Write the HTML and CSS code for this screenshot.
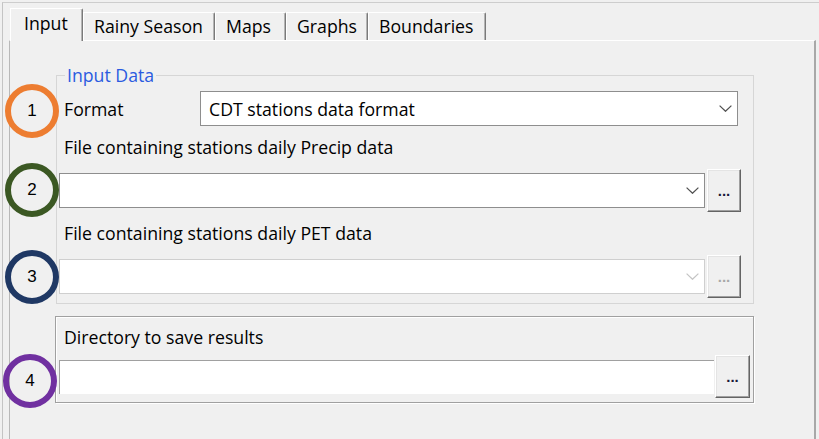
FILE: index.html
```html
<!DOCTYPE html>
<html>
<head>
<meta charset="utf-8">
<link rel="stylesheet" href="styles.css">
</head>
<body>
<div class="window">
  <div class="notebook">
    <div class="tabs">
      <div class="tab active t-input">Input</div>
      <div class="tab t-rainy">Rainy Season</div>
      <div class="tab t-maps">Maps</div>
      <div class="tab t-graphs">Graphs</div>
      <div class="tab t-bound">Boundaries</div>
    </div>
    <div class="panel">
      <fieldset class="group">
        <legend class="legend">Input Data</legend>
        <div class="format-row">
          <span class="label">Format</span>
          <div class="combo">
            <span class="combo-text">CDT stations data format</span>
            <svg class="chev" width="13" height="7" viewBox="0 0 13 7"><path d="M0.6 0.6 L6.5 6.3 L12.4 0.6" fill="none" stroke="#505050" stroke-width="1.2"/></svg>
          </div>
        </div>
        <div class="label line">File containing stations daily Precip data</div>
        <div class="file-row">
          <div class="combo">
            <span class="combo-text"></span>
            <svg class="chev" width="13" height="7" viewBox="0 0 13 7"><path d="M0.6 0.6 L6.5 6.3 L12.4 0.6" fill="none" stroke="#505050" stroke-width="1.2"/></svg>
          </div>
          <button class="browse">...</button>
        </div>
        <div class="label line">File containing stations daily PET data</div>
        <div class="file-row">
          <div class="combo disabled">
            <span class="combo-text"></span>
            <svg class="chev" width="13" height="7" viewBox="0 0 13 7"><path d="M0.6 0.6 L6.5 6.3 L12.4 0.6" fill="none" stroke="#c4c4c4" stroke-width="1.2"/></svg>
          </div>
          <button class="browse disabled">...</button>
        </div>
      </fieldset>
      <div class="dirbox">
        <div class="label line">Directory to save results</div>
        <div class="dir-row">
          <div class="entry"></div>
          <button class="browse wide">...</button>
        </div>
      </div>
      <div class="mark m1">1</div>
      <div class="mark m2">2</div>
      <div class="mark m3">3</div>
      <div class="mark m4">4</div>
    </div>
  </div>
</div>
</body>
</html>
```
FILE: styles.css
```css
* { box-sizing: border-box; }
html, body {
  margin: 0;
  padding: 0;
  width: 819px;
  height: 439px;
  overflow: hidden;
  background: #f0f0f0;
  font-family: "Open Sans", "Noto Sans", sans-serif;
  font-size: 17.7px;
  color: #000;
}
.window {
  margin: 2px 0 0 2px;
  height: 437px;
  border-top: 1px solid #cdcdcd;
  border-left: 1px solid #c4c4c4;
}
.notebook {
  padding-left: 6px;
  height: 100%;
  display: flex;
  flex-direction: column;
}
.tabs {
  display: flex;
  align-items: flex-end;
  height: 37px;
  padding-left: 1px;
}
.tab {
  height: 28px;
  line-height: 22px;
  padding: 2px 0 0 10px;
  background: #f0f0f0;
  border-top: 1px solid #ffffff;
  border-left: 1px solid #ffffff;
  border-right: 1px solid #7a7a7a;
  box-shadow: inset -1px 0 0 #b4b4b4;
  border-top-right-radius: 2px;
  white-space: nowrap;
}
.tab.active {
  height: 33px;
  margin-bottom: -1px;
  padding-left: 13px;
  padding-top: 3px;
  position: relative;
  z-index: 2;
}
.t-input { width: 73px; }
.t-rainy { width: 132px; }
.t-maps { width: 71px; }
.t-graphs { width: 82px; }
.t-bound { width: 118px; }

.panel {
  position: relative;
  flex: 1;
  width: 807px;
  border-top: 1px solid #ffffff;
  border-left: 1px solid #b8b8b8;
  border-right: 2px solid #a8a8a8;
  padding-top: 23px;
}
.label {
  display: block;
  padding-left: 5px;
  line-height: 22px;
  white-space: nowrap;
}
.group {
  margin: 0 0 0 46px;
  width: 698px;
  border: 1px solid #d6d6d6;
  padding: 5px 12px 5px 2px;
  min-width: 0;
}
.legend {
  margin-left: 6px;
  padding: 0 2px;
  line-height: 22px;
  color: #2a5be0;
}
.format-row {
  display: grid;
  grid-template-columns: 141px 538px;
  align-items: center;
  height: 35px;
}
.combo {
  height: 35px;
  background: #ffffff;
  border: 1px solid #8e8e8e;
  display: flex;
  align-items: center;
  justify-content: space-between;
  padding: 0 5px 0 8px;
}
.combo.disabled {
  border-color: #cfcfcf;
}
.combo-text { white-space: nowrap; }
.chev { display: block; flex: none; }
.line { margin-top: 10px; }
.file-row {
  margin-top: 11px;
  display: flex;
  align-items: center;
  gap: 2px;
  height: 43px;
}
.file-row .combo { flex: 1; }
.browse {
  flex: none;
  width: 34px;
  height: 43px;
  padding: 0;
  margin: 0;
  background: #f0f0f0;
  border: 1px solid;
  border-color: #ffffff #646464 #646464 #ffffff;
  box-shadow: inset -1px -1px 0 #a0a0a0, inset 1px 1px 0 #e4e4e4;
  font-family: "Liberation Sans", sans-serif;
  font-weight: bold;
  font-size: 15px;
  line-height: 20px;
  color: #1a1a3a;
  text-align: center;
}
.browse.disabled { color: #a8a8a8; }
.browse.wide { width: 35px; }

.dirbox {
  margin: 12px 0 0 45px;
  width: 699px;
  height: 87px;
  border: 1px solid #a0a0a0;
  box-shadow: inset 1px 1px 0 #ffffff, 1px 1px 0 #ffffff;
  padding: 9px 3px 0 3px;
}
.dirbox .line { margin-top: 0; }
.dir-row {
  margin-top: 7px;
  display: flex;
  align-items: center;
  gap: 1px;
  height: 43px;
}
.entry {
  flex: 1;
  height: 34px;
  background: #ffffff;
  border-top: 1px solid #a0a0a0;
  border-left: 1px solid #a0a0a0;
}

.mark {
  position: absolute;
  width: 54px;
  height: 54px;
  border-radius: 50%;
  border: 6px solid;
  display: flex;
  align-items: center;
  justify-content: center;
  font-family: "Liberation Sans", sans-serif;
  font-size: 17px;
  color: #000;
  background: transparent;
}
.m1 { left: -5px; top: 43px; border-color: #ed7d31; }
.m2 { left: -5px; top: 122px; border-color: #3b5823; }
.m3 { left: -5px; top: 209px; border-color: #1f3864; }
.m4 { left: -7px; top: 313px; border-color: #7030a0; }
```
